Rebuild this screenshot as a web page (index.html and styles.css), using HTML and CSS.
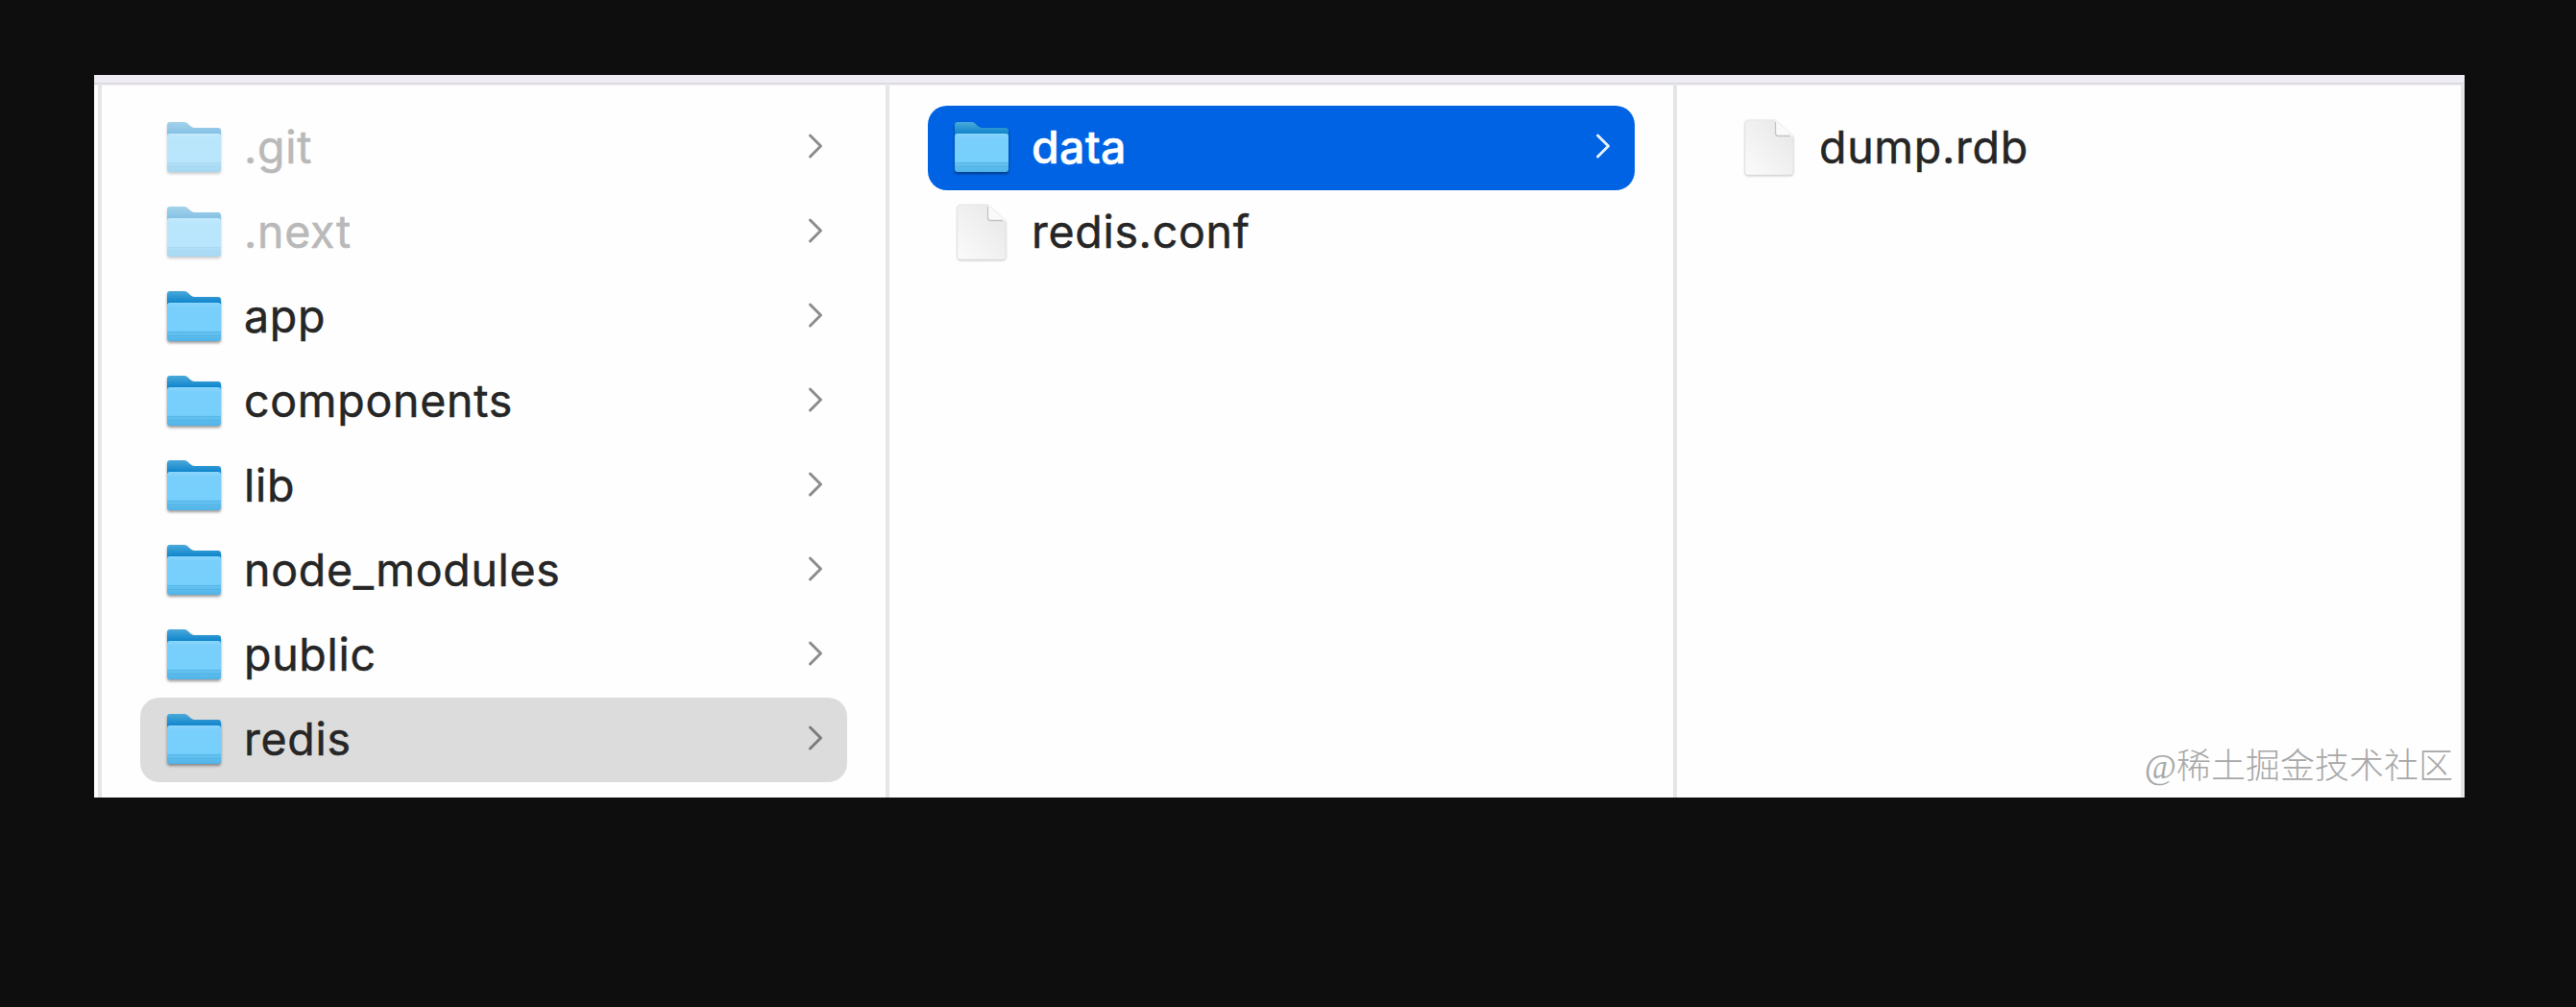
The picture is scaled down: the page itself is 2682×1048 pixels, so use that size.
FILE: index.html
```html
<!DOCTYPE html>
<html lang="en">
<head>
<meta charset="utf-8">
<title>Files</title>
<link rel="stylesheet" href="styles.css">
</head>
<body>
<svg class="defs" width="0" height="0" aria-hidden="true">
  <defs>
    <linearGradient id="back" x1="0" y1="0" x2="0" y2="1">
      <stop offset="0" stop-color="#4aa9da"/><stop offset=".45" stop-color="#0b82cb"/><stop offset="1" stop-color="#0b82cb"/>
    </linearGradient>
    <linearGradient id="front" x1="0" y1="0" x2="0" y2="1">
      <stop offset="0" stop-color="#8ad6fc"/><stop offset=".12" stop-color="#79cffb"/><stop offset=".73" stop-color="#76cffc"/><stop offset=".76" stop-color="#66c3f1"/><stop offset="1" stop-color="#50b3e8"/>
    </linearGradient>
    <linearGradient id="paper" x1="1" y1="0" x2="0" y2="1">
      <stop offset="0" stop-color="#e6e6e6"/><stop offset="1" stop-color="#fbfbfb"/>
    </linearGradient>
    <symbol id="folder" viewBox="0 0 58 54">
      <path d="M1 4Q1 1 4 1H18.500Q20.500 1 22 2.300L25 5Q27 7 29.500 7H54Q57 7 57 10V30H1Z" fill="url(#back)"/>
      <path d="M1 16Q1 13 4 13H54Q57 13 57 16V50Q57 53 54 53H4Q1 53 1 50Z" fill="url(#front)"/>
      <path d="M1 43.500H57M1 47.500H57" stroke="#4bacdf" stroke-width="1" opacity=".5"/>
    </symbol>
    <symbol id="file" viewBox="0 0 52 60">
      <path d="M1 4Q1 1 4 1H32.500L51 18V55Q51 58 48 58H4Q1 58 1 55Z" fill="url(#paper)" stroke="#e2e2e2" stroke-width=".6"/>
      <path d="M32.500 1V14.500Q32.500 17.500 35.500 17.500H50.500Z" fill="#fafafa"/>
      <path d="M32.500 3V14.500Q32.500 17.500 35.500 17.500H48" fill="none" stroke="#c4c4c4" stroke-width="1.300"/>
    </symbol>
    <symbol id="chevron" viewBox="0 0 16 28">
      <path d="M2.500 3L13.500 14L2.500 25" fill="none" stroke="currentColor" stroke-width="3" stroke-linecap="round" stroke-linejoin="round"/>
    </symbol>
  </defs>
</svg>
<main class="finder">
  <div class="toolbar-edge"></div>
  <div class="columns">
    <ul class="column">
      <li class="row hidden"><svg class="folder"><use href="#folder"/></svg><span class="name">.git</span><svg class="chevron"><use href="#chevron"/></svg></li>
      <li class="row hidden"><svg class="folder"><use href="#folder"/></svg><span class="name">.next</span><svg class="chevron"><use href="#chevron"/></svg></li>
      <li class="row"><svg class="folder"><use href="#folder"/></svg><span class="name">app</span><svg class="chevron"><use href="#chevron"/></svg></li>
      <li class="row"><svg class="folder"><use href="#folder"/></svg><span class="name">components</span><svg class="chevron"><use href="#chevron"/></svg></li>
      <li class="row"><svg class="folder"><use href="#folder"/></svg><span class="name">lib</span><svg class="chevron"><use href="#chevron"/></svg></li>
      <li class="row"><svg class="folder"><use href="#folder"/></svg><span class="name">node_modules</span><svg class="chevron"><use href="#chevron"/></svg></li>
      <li class="row"><svg class="folder"><use href="#folder"/></svg><span class="name">public</span><svg class="chevron"><use href="#chevron"/></svg></li>
      <li class="row open"><svg class="folder"><use href="#folder"/></svg><span class="name">redis</span><svg class="chevron"><use href="#chevron"/></svg></li>
    </ul>
    <ul class="column">
      <li class="row selected"><svg class="folder"><use href="#folder"/></svg><span class="name">data</span><svg class="chevron"><use href="#chevron"/></svg></li>
      <li class="row"><svg class="file"><use href="#file"/></svg><span class="name">redis.conf</span></li>
    </ul>
    <ul class="column">
      <li class="row"><svg class="file"><use href="#file"/></svg><span class="name">dump.rdb</span></li>
    </ul>
  </div>
  <div class="watermark">@稀土掘金技术社区</div>
</main>
</body>
</html>
```
FILE: styles.css
```css
* {
  box-sizing: border-box;
}

body {
  margin: 0;
  min-height: 1048px;
  padding: 78px 116px 0 98px;
  background: #0e0e0e;
  font-family: Inter, "Noto Sans CJK SC", sans-serif;
  overflow: hidden;
}

.defs {
  position: absolute;
}

.finder {
  position: relative;
  display: flex;
  flex-direction: column;
  width: 2468px;
  height: 752px;
  background: #fefefe;
  overflow: hidden;
}

.toolbar-edge {
  flex: none;
  height: 11px;
  background: linear-gradient(#f0ecf6 0 7.500px, #dcdadf 8.500px 9.500px, #fefefe 11px);
}

.columns {
  flex: 1;
  display: flex;
  margin-top: -2px;
  padding-left: 4px;
  border-right: 4px solid #e6e6e6;
}

.column {
  flex: none;
  width: 820px;
  margin: 0;
  padding: 23px 40px 0 40px;
  border-left: 4px solid #e6e6e6;
  list-style: none;
}

.row {
  display: flex;
  align-items: center;
  height: 88px;
  padding: 0 25px 0 27px;
  border-radius: 20px;
  color: #262626;
}

.name {
  flex: 1;
  margin-top: -3px;
  padding-left: 23px;
  font-size: 46.5px;
  line-height: 88px;
  letter-spacing: .7px;
  -webkit-text-stroke: .5px currentColor;
}

.folder {
  width: 58px;
  height: 54px;
  margin-top: -3px;
  filter: drop-shadow(0 2px 1.500px rgba(0, 0, 0, .4));
}

.file {
  width: 52px;
  height: 60px;
  margin: 0 3px;
  filter: drop-shadow(0 1.500px 1px rgba(0, 0, 0, .22));
}

.chevron {
  width: 16px;
  height: 28px;
  margin-top: -4px;
  color: #8c8c8c;
}

.hidden .folder {
  opacity: .5;
}

.hidden .name {
  color: #b9b9b9;
}

.open {
  background: #dcdcdc;
}

.open .chevron {
  color: #7c7c7c;
}

.selected {
  background: #0063e3;
  color: #fff;
}

.selected .name {
  font-weight: 500;
  letter-spacing: .3px;
}

.selected .chevron {
  color: #e6effc;
}

.watermark {
  position: absolute;
  right: 12px;
  bottom: 6px;
  color: #a8a8a8;
  font: 300 36px/52px "Liberation Serif", "Noto Sans CJK SC", serif;
}
```
